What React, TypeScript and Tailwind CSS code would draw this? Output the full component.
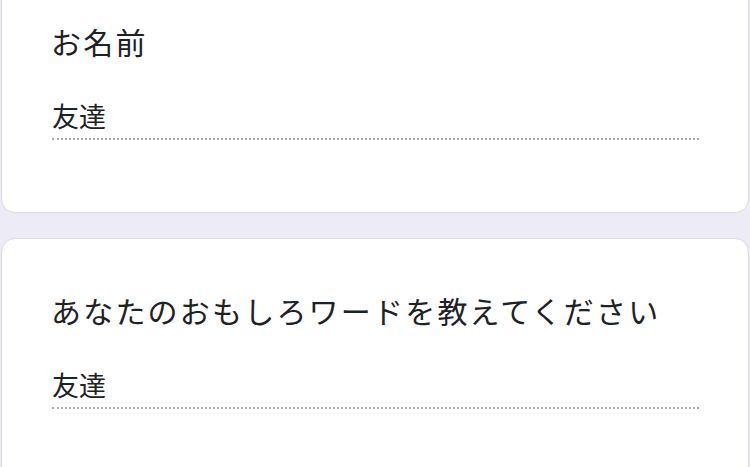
const font = { fontFamily: '"Noto Sans CJK JP", "Noto Sans", sans-serif' };

type Question = { id: number; title: string; answer: string };

const questions: Question[] = [
  { id: 1, title: 'お名前', answer: '友達' },
  { id: 2, title: 'あなたのおもしろワードを教えてください', answer: '友達' },
];

function QuestionCard({ q }: { q: Question }) {
  return (
    <div className="bg-white rounded-[14px] border border-[#dadce0] pl-[49px] pr-[49px] pt-[51px] pb-[72px]">
      <div className="text-[30px] leading-[40px] tracking-[2.2px] text-[#202124]">{q.title}</div>
      <div className="mt-[37px] pb-[4px] ml-[1px] border-b-2 border-dotted border-[#a8a8a8]">
        <div className="text-[27px] leading-[36px] text-[#202124]">{q.answer}</div>
      </div>
    </div>
  );
}

export default function App() {
  return (
    <div className="w-[750px] h-[467px] overflow-hidden bg-[#edebf6]" style={font}>
      <div className="flex flex-col gap-[25px] px-[1px] -mt-[31px]">
        {questions.map((q) => (
          <QuestionCard key={q.id} q={q} />
        ))}
      </div>
    </div>
  );
}
